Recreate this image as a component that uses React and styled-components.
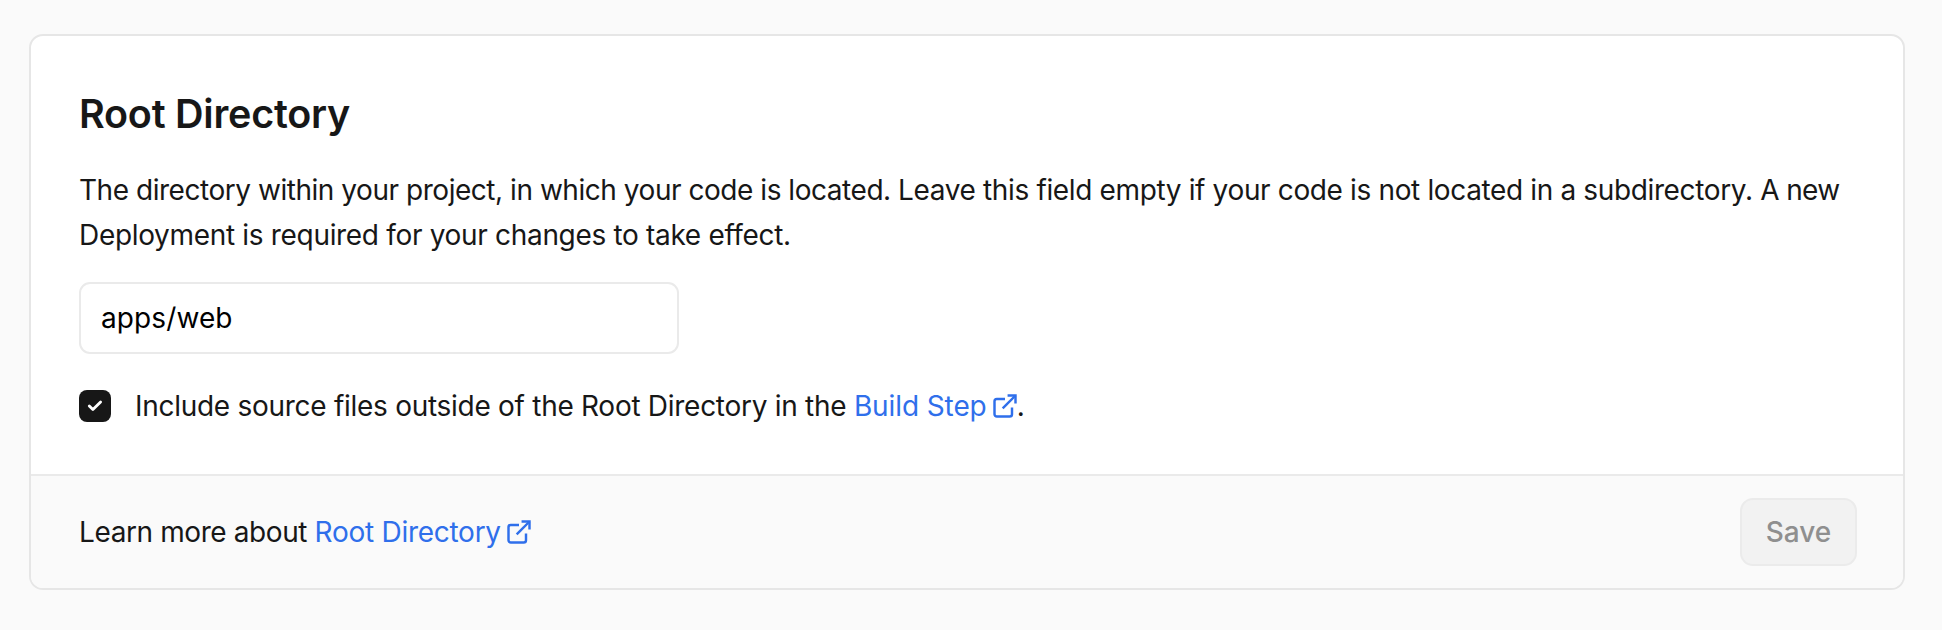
import React, { useState } from "react";
import styled, { createGlobalStyle } from "styled-components";

const GlobalStyle = createGlobalStyle`
  *, *::before, *::after { box-sizing: border-box; }
  body {
    margin: 0;
    background: #fafafa;
    color: #171717;
    font-family: Inter, "Liberation Sans", sans-serif;
    font-size: 28px;
    -webkit-font-smoothing: antialiased;
  }
`;

const Page = styled.main`
  padding: 34px 37px 40px 29px;
`;

const Card = styled.section`
  display: flex;
  flex-direction: column;
  height: 556px;
  border: 2px solid #e6e6e6;
  border-radius: 14px;
  background: #fff;
  overflow: hidden;
`;

const CardBody = styled.div`
  flex: 1;
  padding: 48px;
`;

const Title = styled.h2`
  margin: 0 0 24px;
  font-size: 39.5px;
  font-weight: 620;
  line-height: 60px;
  letter-spacing: -0.24px;
`;

const Description = styled.p`
  margin: 0 0 24px;
  line-height: 45px;
  white-space: nowrap;
`;

const Text = styled.span`
  white-space: pre;
  letter-spacing: ${(p) => p.$tracking || 0}px;
`;

const TextInput = styled.input`
  display: block;
  width: 600px;
  height: 72px;
  padding: 0 20px;
  border: 2px solid #eaeaea;
  border-radius: 11px;
  outline: none;
  background: #fff;
  color: #000;
  font: inherit;
  letter-spacing: 0.1px;
`;

const Option = styled.div`
  display: flex;
  align-items: center;
  gap: 24px;
  height: 32px;
  margin-top: 36px;
  line-height: 32px;
`;

const CheckBox = styled.button`
  display: flex;
  align-items: center;
  justify-content: center;
  width: 32px;
  height: 32px;
  padding: 0;
  border: 0;
  border-radius: 8px;
  background: #171717;
`;

const Line = styled.div`
  display: flex;
  align-items: center;
`;

const Link = styled.a`
  display: inline-flex;
  align-items: center;
  gap: 4px;
  margin-right: -2px;
  color: #2f6feb;
  text-decoration: none;
`;

const CardFooter = styled.footer`
  display: flex;
  align-items: center;
  justify-content: space-between;
  height: 114px;
  padding: 0 46px 0 48px;
  border-top: 2px solid #eaeaea;
  background: #fafafa;
`;

const SaveButton = styled.button`
  width: 117px;
  height: 68px;
  padding: 0;
  border: 2px solid #ebebeb;
  border-radius: 13px;
  background: #f2f2f2;
  color: #8f8f8f;
  font: inherit;
  font-weight: 500;
`;

const ExternalIcon = () => (
  <svg width="28" height="28" viewBox="0 0 24 24" fill="none" stroke="currentColor" strokeWidth="2.1" strokeLinecap="butt" strokeLinejoin="miter">
    <path d="M18 13.2V19a2 2 0 0 1-2 2H5a2 2 0 0 1-2-2V8a2 2 0 0 1 2-2h7" />
    <path d="M14.2 3H21v6.8" />
    <path d="M10 14 21 3" />
  </svg>
);

const CheckIcon = () => (
  <svg width="32" height="32" viewBox="0 0 32 32" fill="none" stroke="#fff" strokeWidth="2.8" strokeLinecap="round" strokeLinejoin="round">
    <path d="M10.3 16 13.9 19.6 21.6 11.9" />
  </svg>
);

export default function App() {
  const [directory, setDirectory] = useState("apps/web");
  const [included, setIncluded] = useState(true);
  return (
    <Page>
      <GlobalStyle />
      <Card>
        <CardBody>
          <Title>Root Directory</Title>
          <Description>
            <Text $tracking={-0.46}>{"The directory within your project, in which your code is located. "}</Text>
            <Text $tracking={-0.36}>{"Leave this field empty if your code is not located in a subdirectory. "}</Text>
            <Text $tracking={-0.6}>A new</Text>
            <br />
            <Text $tracking={-0.32}>Deployment is required for your changes to take effect.</Text>
          </Description>
          <TextInput value={directory} onChange={(e) => setDirectory(e.target.value)} spellCheck={false} />
          <Option>
            <CheckBox type="button" role="checkbox" aria-checked={included} onClick={() => setIncluded(!included)}>
              {included && <CheckIcon />}
            </CheckBox>
            <Line>
              <Text $tracking={-0.28}>{"Include source files outside of the Root Directory in the "}</Text>
              <Link href="#"><Text $tracking={-0.1}>Build Step</Text><ExternalIcon /></Link>
              <Text>.</Text>
            </Line>
          </Option>
        </CardBody>
        <CardFooter>
          <Line>
            <Text $tracking={-0.4}>{"Learn more about "}</Text>
            <Link href="#"><Text $tracking={-0.27}>Root Directory</Text><ExternalIcon /></Link>
          </Line>
          <SaveButton type="button" disabled>Save</SaveButton>
        </CardFooter>
      </Card>
    </Page>
  );
}
